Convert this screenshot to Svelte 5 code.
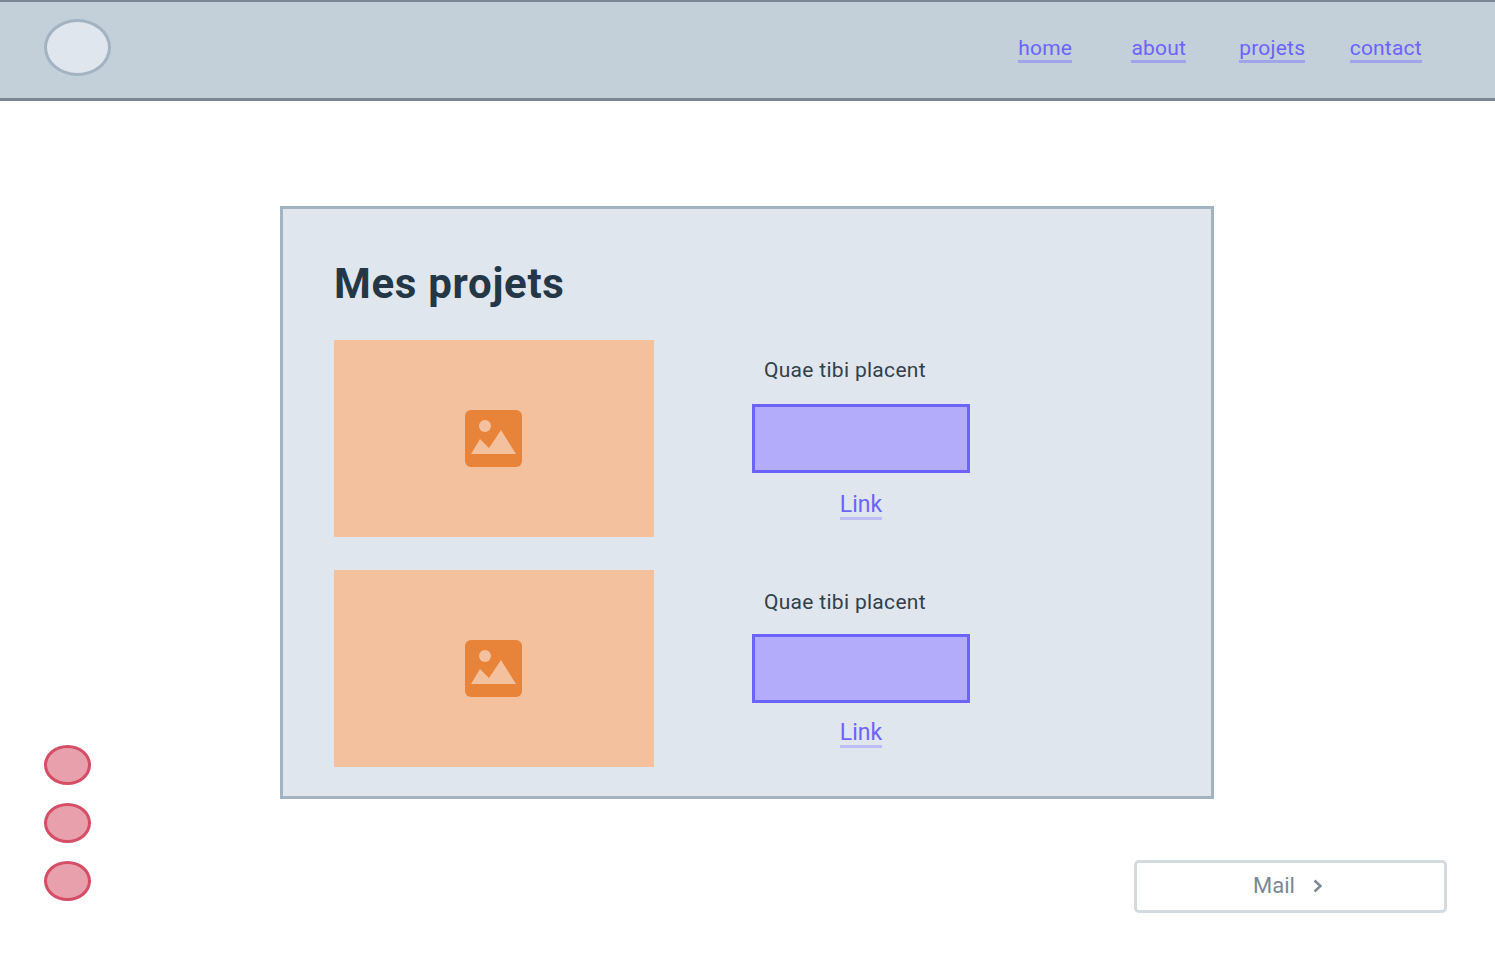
<script>
  const links = ["home", "about", "projets", "contact"];
  const projects = [
    { title: "Quae tibi placent", link: "Link" },
    { title: "Quae tibi placent", link: "Link" }
  ];
</script>

<header class="top">
  <div class="logo"></div>
  <nav>
    {#each links as item}
      <div class="cell"><a href="#top">{item}</a></div>
    {/each}
  </nav>
</header>

<main class="page">
  <aside class="dots">
    <span></span>
    <span></span>
    <span></span>
  </aside>

  <section class="card">
    <h1>Mes projets</h1>
    {#each projects as project, i}
      <article class="row" class:second={i === 1}>
        <div class="thumb">
          <svg width="58" height="58" viewBox="0 0 58 58">
            <rect x="0" y="0" width="57" height="57" rx="6" fill="#e8833a" />
            <circle cx="20" cy="16" r="6" fill="#f3c19d" />
            <path d="M6 44 15 29 24 38 36 20 51 44Z" fill="#f3c19d" />
          </svg>
        </div>
        <div class="detail">
          <p>{project.title}</p>
          <div class="box"></div>
          <a href="#top">{project.link}</a>
        </div>
      </article>
    {/each}
  </section>

  <button class="mail">
    Mail
    <svg width="12" height="14" viewBox="0 0 12 14">
      <path d="M2.5 1.5 8.5 7 2.5 12.5" fill="none" stroke="#7b8794" stroke-width="2.4" />
    </svg>
  </button>
</main>

<style>
  :global(body) {
    margin: 0;
    background: #fff;
    font-family: Roboto, "Liberation Sans", sans-serif;
  }

  .top {
    box-sizing: border-box;
    height: 101px;
    display: flex;
    align-items: flex-start;
    justify-content: space-between;
    padding: 19px 52.5px 0 44px;
    background: #c3cfd9;
    border-top: 2px solid #7b8794;
    border-bottom: 3px solid #7b8794;
  }

  .logo {
    box-sizing: border-box;
    width: 67px;
    height: 57px;
    margin-top: -2px;
    border-radius: 50%;
    background: #dfe6ee;
    border: 3px solid #a3b3c2;
  }

  nav {
    display: flex;
    padding-top: 16px;
  }

  .cell {
    width: 113.5px;
    text-align: center;
  }

  a {
    color: #6c63ff;
    text-decoration: none;
    border-bottom: 3px solid rgba(108, 99, 255, 0.4);
  }

  nav a {
    font-size: 21px;
    line-height: 23px;
    display: inline-block;
    letter-spacing: 0.2px;
  }

  .page {
    display: grid;
    grid-template-columns: 280px 854px 80px 232px;
    grid-template-rows: auto auto;
    padding-top: 105px;
  }

  .dots {
    grid-column: 1;
    grid-row: 1 / 3;
    align-self: end;
    display: flex;
    flex-direction: column;
    gap: 18px;
    padding: 0 0 12px 44px;
  }

  .dots span {
    box-sizing: border-box;
    width: 47px;
    height: 40px;
    border-radius: 50%;
    background: #e8a0ad;
    border: 3px solid #d64d66;
  }

  .card {
    grid-column: 2 / 4;
    grid-row: 1;
    box-sizing: border-box;
    height: 593px;
    padding: 50px 51px 28px;
    background: #dfe6ee;
    border: 3px solid #a3b3c2;
  }

  h1 {
    margin: 0 0 32px;
    height: 49px;
    font-size: 42px;
    line-height: 49px;
    font-weight: 700;
    letter-spacing: 0.7px;
    color: #243746;
  }

  .row {
    display: flex;
    gap: 98px;
    height: 197px;
    margin-bottom: 33px;
  }

  .thumb {
    width: 320px;
    height: 197px;
    display: flex;
    align-items: center;
    justify-content: center;
    background: #f3c19d;
  }

  .thumb svg {
    display: block;
  }

  .detail {
    width: 218px;
    display: grid;
    grid-template-rows: 64px 69px auto;
  }

  .detail p {
    margin: 0;
    padding: 18px 0 0 12px;
    font-size: 21px;
    line-height: 25px;
    color: #323f4b;
    letter-spacing: 0.3px;
    white-space: nowrap;
  }

  .second .detail p {
    padding-top: 20px;
  }

  .box {
    box-sizing: border-box;
    background: #b3acfb;
    border: 3px solid #6c63ff;
  }

  .detail a {
    justify-self: center;
    align-self: start;
    margin-top: 20px;
    font-size: 23px;
    line-height: 24px;
    border-bottom-color: rgba(108, 99, 255, 0.3);
  }

  .second .detail a {
    margin-top: 18px;
  }

  .mail {
    grid-column: 3 / 5;
    grid-row: 2;
    box-sizing: border-box;
    width: 313px;
    height: 53px;
    margin-top: 61px;
    display: flex;
    align-items: center;
    justify-content: center;
    gap: 17px;
    background: #fff;
    border: 3px solid #d3dae0;
    border-radius: 5px;
    font-family: inherit;
    font-size: 22px;
    color: #7b8794;
    padding: 0 4px 2px 0;
  }
</style>
